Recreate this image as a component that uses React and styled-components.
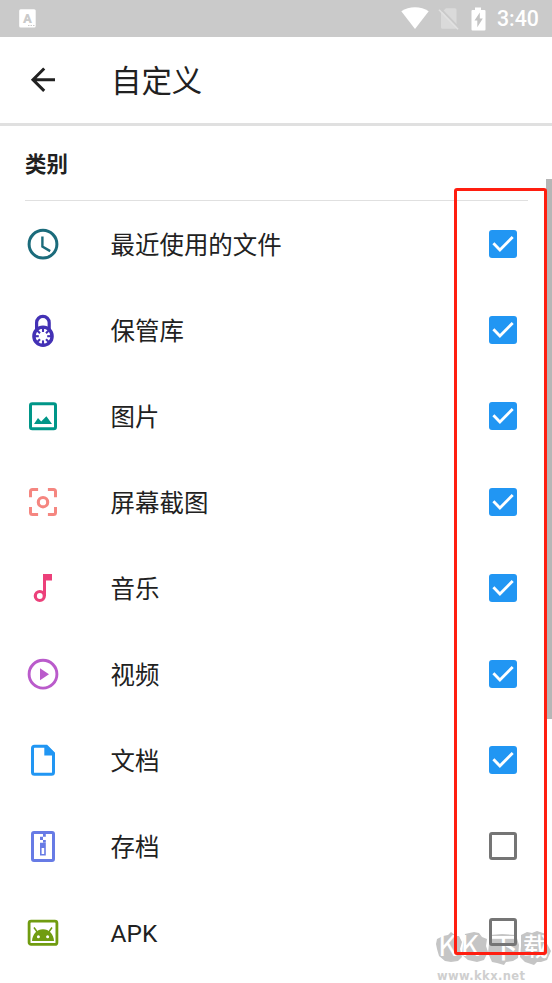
import React from "react";
import styled, { createGlobalStyle } from "styled-components";

const GlobalStyle = createGlobalStyle`
  body {
    margin: 0;
    background-color: #fff;
    overflow: hidden;
  }
`;

const Screen = styled.div`
  position: relative;
  width: 552px;
  height: 983px;
  overflow: hidden;
  background-color: #fff;
  color: #212121;
  font-family: Roboto, "Noto Sans CJK SC", sans-serif;
`;

const StatusBar = styled.div`
  display: flex;
  align-items: center;
  justify-content: space-between;
  box-sizing: border-box;
  height: 37px;
  padding: 0 12px 0 19px;
  background-color: #cacaca;
  color: #fff;
  svg {
    display: block;
  }
`;

const StatusIcons = styled.div`
  display: flex;
  align-items: center;
`;

const SimIcon = styled.svg`
  margin-left: 9px;
`;

const BatteryIcon = styled.svg`
  margin-left: 11px;
`;

const Clock = styled.span`
  width: 43px;
  margin-left: 11px;
  font-size: 21.3px;
  font-weight: 500;
  line-height: 37px;
  white-space: nowrap;
`;

const Toolbar = styled.header`
  display: flex;
  align-items: center;
  box-sizing: border-box;
  height: 89px;
  padding-left: 25px;
  border-bottom: 3px solid #e0e0e0;
`;

const Title = styled.h1`
  margin: 0 0 0 50px;
  padding-top: 3px;
  font-size: 30.4px;
  font-weight: 400;
  line-height: 40px;
`;

const SectionHeader = styled.div`
  box-sizing: border-box;
  height: 75px;
  margin: 0 24px 0 25px;
  border-bottom: 1px solid #e0e0e0;
  h2 {
    margin: 0;
    font-size: 21.4px;
    font-weight: 700;
    line-height: 78px;
  }
`;

const List = styled.ul`
  position: relative;
  z-index: 1;
  list-style: none;
  margin: 0;
  padding: 0;
`;

const Row = styled.li`
  display: flex;
  align-items: center;
  height: 86px;
  padding: 0 35px 0 25px;
`;

const Icon = styled.svg`
  display: block;
  flex: none;
  width: 36px;
  height: 36px;
  color: ${({ $color }) => $color};
  fill: none;
  stroke: currentColor;
  stroke-width: 3;
`;

const Label = styled.span`
  flex: 1;
  margin-left: 49.6px;
  padding-top: 3px;
  font-size: 24.45px;
  line-height: 36px;
`;

const Box = styled.span`
  box-sizing: border-box;
  width: 28px;
  height: 28px;
  border-radius: 3px;
  border: ${({ $on }) => ($on ? "none" : "3px solid #757575")};
  background-color: ${({ $on }) => ($on ? "#2196f3" : "transparent")};
  svg {
    display: block;
  }
`;

const ScrollThumb = styled.div`
  position: absolute;
  top: 179px;
  right: 0;
  width: 6px;
  height: 540px;
  background-color: #b6b6b6;
`;

const Highlight = styled.div`
  position: absolute;
  z-index: 2;
  box-sizing: border-box;
  left: 454px;
  top: 188px;
  width: 93px;
  height: 767px;
  border: 3px solid #ff1e10;
  border-radius: 3px;
`;

const Watermark = styled.svg`
  position: absolute;
  left: 432px;
  top: 906px;
  display: block;
`;

const ticks = [0, 45, 90, 135, 180, 225, 270, 315];

const icons = {
  recent: (
    <>
      <circle cx="18" cy="18.2" r="13.9" />
      <path d="M17.4 10.5v10l7.8 4.6" strokeWidth="2.4" />
    </>
  ),
  vault: (
    <>
      <path d="M11.6 19v-8.3a6.3 6.3 0 0 1 12.6 0V19" strokeWidth="3.2" />
      <circle cx="18" cy="24.2" r="9.1" fill="#fff" strokeWidth="3.4" />
      {ticks.map((angle) => (
        <path
          key={angle}
          d="M18 16v4"
          strokeWidth="2.1"
          transform={`rotate(${angle} 18 24.2)`}
        />
      ))}
    </>
  ),
  image: (
    <>
      <rect x="5.5" y="5.7" width="25" height="25" rx="1.8" />
      <path
        d="M9 26l4-6 3.2 3.6 5.2-5.4L27 26z"
        fill="currentColor"
        stroke="none"
      />
    </>
  ),
  screenshot: (
    <>
      <path d="M5.5 13.3V7.5a2 2 0 0 1 2-2h5.6M22.9 5.5h5.6a2 2 0 0 1 2 2v5.8M30.5 23v5.5a2 2 0 0 1-2 2h-5.6M13.1 30.5H7.5a2 2 0 0 1-2-2V23" />
      <circle cx="18" cy="18.2" r="4.7" strokeWidth="3.1" />
    </>
  ),
  music: (
    <>
      <circle cx="14.8" cy="26" r="4.5" strokeWidth="3.2" />
      <path d="M18 4h9v6.5h-6V26h-3z" fill="currentColor" stroke="none" />
    </>
  ),
  video: (
    <>
      <circle cx="18" cy="18.2" r="13.9" strokeWidth="2.9" />
      <path d="M15 12.2l9 6-9 6z" fill="currentColor" stroke="none" />
    </>
  ),
  document: (
    <>
      <path d="M7.5 6v24.2a2 2 0 0 0 2 2h17a2 2 0 0 0 2-2V11.4l-7-7.2h-12a2 2 0 0 0-2 2z" />
      <path d="M19.3 4h3.4l7 7v2.5H19.3z" fill="currentColor" stroke="none" />
    </>
  ),
  archive: (
    <>
      <rect x="7.5" y="4.5" width="21" height="28" rx="1.5" />
      <path
        d="M18 5.5h2.8v3.2H18zM15 8.7h3V12h-3zM18 12h2.8v3H18zM15 14.7h5.8v12.8H15zM16.6 20v6h2.6v-6z"
        fill="currentColor"
        fillRule="evenodd"
        stroke="none"
      />
    </>
  ),
  apk: (
    <>
      <rect x="4.1" y="7.1" width="27.8" height="23.3" rx="2" strokeWidth="2.8" />
      <path d="M9 13.5l3.2 4.5M27 13.5L23.8 18" strokeWidth="1.5" />
      <path
        d="M7 27c.4-7 5-11.8 11-11.8S28.6 20 29 27z"
        fill="currentColor"
        stroke="none"
      />
      <circle cx="13.4" cy="22.8" r="1.5" fill="#fff" stroke="none" />
      <circle cx="22.6" cy="22.8" r="1.5" fill="#fff" stroke="none" />
    </>
  ),
};

const categories = [
  { id: "recent", label: "最近使用的文件", color: "#1b6b7b", checked: true },
  { id: "vault", label: "保管库", color: "#4331b5", checked: true },
  { id: "image", label: "图片", color: "#009688", checked: true },
  { id: "screenshot", label: "屏幕截图", color: "#f58680", checked: true },
  { id: "music", label: "音乐", color: "#ec407a", checked: true },
  { id: "video", label: "视频", color: "#ba5bcb", checked: true },
  { id: "document", label: "文档", color: "#2196f3", checked: true },
  { id: "archive", label: "存档", color: "#677be5", checked: false },
  { id: "apk", label: "APK", color: "#709c10", checked: false },
];

const CheckBox = ({ checked }) => (
  <Box $on={checked}>
    {checked && (
      <svg width="28" height="28" fill="none" stroke="#fff" strokeWidth="2.9">
        <path d="M4.4 13.3l6.5 6.6L23.7 7" />
      </svg>
    )}
  </Box>
);

const App = () => {
  return (
    <Screen>
      <GlobalStyle />
      <StatusBar>
        <svg width="17" height="19" viewBox="0 0 17 19">
          <rect x="0.2" y="0.3" width="16.5" height="18.3" rx="1.5" fill="#fff" />
          <text
            x="8.4"
            y="13.6"
            textAnchor="middle"
            fontFamily="Roboto, sans-serif"
            fontSize="13"
            fontWeight="900"
            fill="#cacaca"
          >
            A
          </text>
          <path d="M9 16.5h6.5" stroke="#cacaca" strokeDasharray="1.5 1" />
        </svg>
        <StatusIcons>
          <svg width="28" height="23" viewBox="0 0 28 23">
            <path d="M0.3 4.2C8-1.2 20-1.2 27.7 4.2L14 22z" fill="#fff" />
          </svg>
          <SimIcon width="22" height="23" viewBox="0 0 22 23">
            <path
              d="M8 1.3h9a1.5 1.5 0 0 1 1.5 1.5v17.4a1.5 1.5 0 0 1-1.5 1.5H4.5A1.5 1.5 0 0 1 3 20.2V6.3z"
              fill="#dadada"
            />
            <path d="M2.5 1.6l18.3 19.2" stroke="#cacaca" strokeWidth="2" />
            <path d="M1 2.8l19 19.4" stroke="#e1e1e1" strokeWidth="1.6" />
          </SimIcon>
          <BatteryIcon width="15" height="24" viewBox="0 0 15 24">
            <path
              d="M4 0.5h6V3h3.5q1 0 1 1v18.5q0 1-1 1h-12q-1 0-1-1V4q0-1 1-1H4z"
              fill="#fff"
            />
            <path d="M8.8 5.5v6h3L6.3 20.3v-6.7H3.5z" fill="#c4c4c4" />
          </BatteryIcon>
          <Clock>3:40</Clock>
        </StatusIcons>
      </StatusBar>
      <Toolbar>
        <Icon $color="#212121" viewBox="0 0 36 36">
          <path d="M30 17.7H8M19.2 6.5L8 17.7l11.2 11.2" />
        </Icon>
        <Title>自定义</Title>
      </Toolbar>
      <SectionHeader>
        <h2>类别</h2>
      </SectionHeader>
      <Watermark width="120" height="77" viewBox="0 -20 120 77">
        <g fill="#c5c5c5">
          <path d="M5 13l6-3 5-1 3-3 5 4 3 0 3 6-2 7 2 8-4 4-7 1-6-1-6-5-2-7-1-5z" />
          <path d="M33 8l9-2 5 1 3 4 5 2-1 7 2 6-4 8-7 2-9-2-6-5 1-10z" />
          <path d="M58 9l12-1 14 1 3 10-1 13-5 3-7 1-2 3-7-2-5-1-4-9 1-9z" />
          <path d="M89 9l6-3 5 1 5-2 9 3v8l5 9-4 9-6 2-4 0-3 3-9-3-5-5 1-11z" />
        </g>
        <g fontFamily="'Noto Sans CJK SC', sans-serif" fill="#fff">
          <text x="6" y="30" fontSize="29">K</text>
          <text x="28.5" y="30" fontSize="29">K</text>
          <text x="58" y="31.5" fontSize="28" fontWeight="500">下</text>
          <text x="91" y="29.5" fontSize="25" fontWeight="500">载</text>
        </g>
        <text
          x="5"
          y="54.2"
          fontFamily="'DejaVu Sans', sans-serif"
          fontSize="11.5"
          fontWeight="700"
          fill="#cfcfcf"
          textLength="88"
        >
          www.kkx.net
        </text>
      </Watermark>
      <List>
        {categories.map(({ id, label, color, checked }) => (
          <Row key={id}>
            <Icon $color={color} viewBox="0 0 36 36">
              {icons[id]}
            </Icon>
            <Label>{label}</Label>
            <CheckBox checked={checked} />
          </Row>
        ))}
      </List>
      <ScrollThumb />
      <Highlight />
    </Screen>
  );
};

export default App;
